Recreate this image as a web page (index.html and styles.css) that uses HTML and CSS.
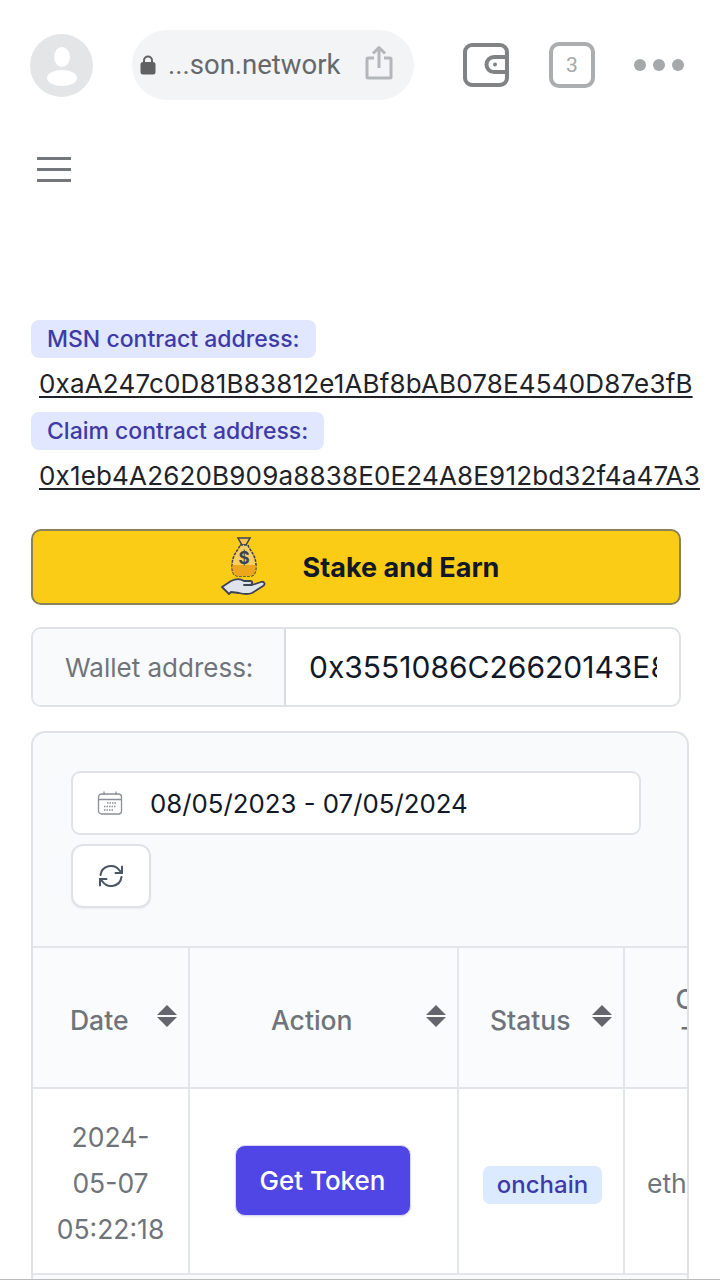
FILE: index.html
```html
<!DOCTYPE html>
<html lang="en">
<head>
<meta charset="utf-8">
<title>Stake and Earn</title>
<link rel="stylesheet" href="styles.css">
</head>
<body>
<header class="browser">
  <div class="avatar">
    <svg width="34" height="40" viewBox="0 0 34 40"><ellipse cx="17" cy="10" rx="8" ry="10" fill="#fff"/><ellipse cx="17" cy="31" rx="15" ry="8" fill="#fff"/></svg>
  </div>
  <div class="url">
    <svg class="lock" width="16" height="20" viewBox="0 0 16 20"><path d="M4 8V5.500a4 4 0 0 1 8 0V8" fill="none" stroke="#5f6163" stroke-width="2"/><rect x="0.500" y="7" width="15" height="12.500" rx="2.500" fill="#5f6163"/></svg>
    <span class="url-text">...son.network</span>
    <svg class="share" width="28" height="35" viewBox="0 0 28 35" fill="none" stroke="#b4b7b9" stroke-width="3" stroke-linejoin="round"><path d="M14 23V3M8 8.500l6-6 6 6"/><path d="M9 13H3a1 1 0 0 0-1 1v18a1 1 0 0 0 1 1h22a1 1 0 0 0 1-1V14a1 1 0 0 0-1-1h-6"/></svg>
  </div>
  <svg class="wallet" width="48" height="46" viewBox="0 0 48 46" fill="none" stroke="#808284" stroke-width="4"><rect x="3" y="3" width="42" height="40" rx="7"/><path d="M45 15H32a7.500 7.500 0 0 0 0 15h13"/><circle cx="33" cy="22.500" r="2" fill="#808284" stroke="none"/></svg>
  <div class="tabs">3</div>
  <div class="dots"><i></i><i></i><i></i></div>
</header>

<button class="menu" aria-label="Menu"><i></i><i></i><i></i></button>

<main class="content">
  <span class="badge">MSN contract address:</span>
  <a class="addr" href="#">0xaA247c0D81B83812e1ABf8bAB078E4540D87e3fB</a>
  <span class="badge">Claim contract address:</span>
  <a class="addr" href="#">0x1eb4A2620B909a8838E0E24A8E912bd32f4a47A3</a>

  <button class="stake">
    <svg width="46" height="60" viewBox="0 0 46 60">
      <path d="M17 1h12l-4 7h-4z" fill="#f6c453" stroke="#3c4454" stroke-width="1.500"/>
      <path d="M19 8h8c1 5 8 9 8 21 0 7-2 10-6 10H17c-4 0-6-3-6-10 0-12 7-16 8-21z" fill="#f8cf5e" stroke="#3c4454" stroke-width="1.500" stroke-dasharray="3 1"/>
      <path d="M11.500 28h23c.5 7-1 11-5.500 11H17c-4.500 0-6-4-5.500-11z" fill="#eda51c"/>
      <text class="dollar" x="23" y="27">$</text>
      <path d="M1 50l9-6c6-3 10-2 13 0h6c3 0 3 3 0 4h-6 8l9-3c3-1 5 2 2 4l-11 7c-5 2-9 1-13 0l-8-1-2 2z" fill="#dfe3ea" stroke="#3c4454" stroke-width="1.800" stroke-linejoin="round"/>
    </svg>
    <span>Stake and Earn</span>
  </button>

  <div class="wallet-group">
    <span class="wallet-label">Wallet address:</span>
    <span class="wallet-value">0x3551086C26620143E8</span>
  </div>

  <section class="card">
    <div class="filters">
      <div class="date">
        <svg width="26" height="26" viewBox="0 0 26 26" fill="none" stroke="#8b9097" stroke-width="1.300"><rect x="1.500" y="4" width="23" height="20" rx="3"/><path d="M1.500 9.500h23M7 1.500V5M19 1.500V5"/><path d="M10 13h9M7 16.500h12M7 20h9" stroke-dasharray="1.500 1"/></svg>
        <span>08/05/2023 - 07/05/2024</span>
      </div>
      <button class="refresh" aria-label="Refresh">
        <svg width="26" height="24" viewBox="0 0 26 24" fill="none" stroke="#4b5563" stroke-width="2" stroke-linecap="round" stroke-linejoin="round"><path d="M2.500 11A10.500 10.500 0 0 1 21.500 6.500L24 9"/><path d="M24 2.500V9h-6.500"/><path d="M23.500 13A10.500 10.500 0 0 1 4.500 17.500L2 15"/><path d="M2 21.500V15h6.500"/></svg>
      </button>
    </div>
    <table class="grid">
      <colgroup><col class="c1"><col class="c2"><col class="c3"><col class="c4"></colgroup>
      <thead>
        <tr>
          <th><div class="th-in"><span>Date</span><b class="sort"></b></div></th>
          <th><div class="th-in th-action"><span>Action</span><b class="sort"></b></div></th>
          <th><div class="th-in th-status"><span>Status</span><b class="sort"></b></div></th>
          <th class="chain">Chain<br>Type</th>
        </tr>
      </thead>
      <tbody>
        <tr>
          <td class="when">2024-<br>05-07<br>05:22:18</td>
          <td><button class="get">Get Token</button></td>
          <td><span class="status">onchain</span></td>
          <td class="net">ethereum</td>
        </tr>
      </tbody>
    </table>
    <div class="next-row"></div>
  </section>
</main>
</body>
</html>
```

FILE: styles.css
```css
* { box-sizing: border-box; }
html, body { margin: 0; height: 1280px; overflow: hidden; background: #fff; }
body { font-family: Inter, "Liberation Sans", sans-serif; color: #111827; width: 720px; }
body::after { content: ""; position: fixed; left: 0; right: 0; bottom: 0; height: 1px; background: #bcbcbc; }
button { font-family: inherit; cursor: pointer; }

.browser { display: flex; align-items: center; height: 130px; padding: 0 0 0 30px; }
.avatar { width: 63px; height: 63px; border-radius: 50%; background: #e3e5e6; display: flex; align-items: center; justify-content: center; overflow: hidden; padding-top: 4px; }
.url { width: 282px; height: 70px; margin-left: 39px; border-radius: 35px; background: #f2f4f5; display: flex; align-items: center; padding-left: 8px; }
.lock { flex: none; }
.url-text { font: 27.500px Roboto, sans-serif; color: #66696c; margin: 0 0 2px 12px; white-space: nowrap; }
.share { margin: 0 0 6px 25px; flex: none; }
.wallet { margin-left: 48px; flex: none; }
.tabs { width: 46px; height: 46px; margin-left: 39px; border: 4px solid #abadaf; border-radius: 10px; display: flex; align-items: center; justify-content: center; font: 21px Roboto, sans-serif; color: #a5a7a9; }
.dots { display: flex; gap: 7px; margin-left: 39px; }
.dots i { width: 12px; height: 12px; border-radius: 50%; background: #a6a8aa; }

.menu { display: flex; flex-direction: column; gap: 8px; border: 0; background: none; padding: 0; margin: 27px 0 0 37px; width: 34px; }
.menu i { display: block; height: 3px; width: 34px; background: #74777c; }

.content { padding: 138px 0 0 31px; display: flex; flex-direction: column; align-items: flex-start; }
.badge { display: block; height: 38px; line-height: 38px; padding: 0 16px; background: #e0e7ff; color: #3f3aa8; border-radius: 8px; font-size: 23px; font-weight: 500; white-space: nowrap; }
.addr { display: block; height: 54px; line-height: 52px; margin-left: 8px; color: #1f2328; font-size: 26px; letter-spacing: .17px; white-space: nowrap; text-decoration: underline; text-underline-offset: 3px; }
.stake { width: 650px; height: 76px; margin-top: 25px; display: flex; align-items: center; justify-content: center; gap: 36px; background: #facc15; border: 2px solid #8a8258; border-radius: 10px; font-size: 27px; font-weight: 700; color: #111827; padding: 0 0 0 8px; }
.dollar { font: 700 17px Inter, sans-serif; fill: #3c4454; text-anchor: middle; }

.wallet-group { width: 650px; height: 80px; margin-top: 22px; display: flex; border: 2px solid #dfe3e8; border-radius: 10px; overflow: hidden; }
.wallet-label { width: 253px; flex: none; background: #f9fafb; border-right: 2px solid #d8dbe0; color: #6f747b; font-size: 26px; display: flex; align-items: center; padding-left: 32px; white-space: nowrap; }
.wallet-value { flex: 1; overflow: hidden; white-space: nowrap; font-size: 30px; line-height: 76px; padding: 0; margin: 0 22px 0 23px; color: #111827; }

.card { width: 658px; margin-top: 24px; border: 2px solid #dfe3e8; border-bottom: 0; border-radius: 14px 14px 0 0; background: #f9fafb; overflow: hidden; }
.filters { padding: 38px 0 38px 38px; }
.date { width: 570px; height: 64px; border: 2px solid #dfe3e8; border-radius: 9px; background: #fff; display: flex; align-items: center; padding-left: 24px; gap: 27px; font-size: 25.800px; color: #111827; }
.refresh { display: flex; align-items: center; justify-content: center; width: 80px; height: 64px; margin-top: 9px; background: #fff; border: 2px solid #dfe3e8; border-radius: 12px; box-shadow: 0 1px 2px rgba(0,0,0,.06); padding: 0; }

.grid { width: 767px; table-layout: fixed; border-collapse: collapse; font-size: 26.500px; color: #6f747b; }
.c1 { width: 156px; } .c2 { width: 269px; } .c3 { width: 166px; } .c4 { width: 176px; }
.grid th, .grid td { border: 2px solid #e2e5e9; }
.grid tr > :first-child { border-left: 0; }
.grid th { height: 141px; font-weight: 500; background: #fafbfc; }
.th-in { display: flex; justify-content: space-between; align-items: flex-start; padding: 4px 10px 0 36px; }
.th-in.th-action { padding-left: 80px; }
.th-in.th-status { padding-left: 30px; }
.th-in span { line-height: 32px; }
.sort { position: relative; display: block; width: 20px; height: 24px; margin-top: 1px; }
.sort::before, .sort::after { content: ""; position: absolute; left: 0; border: 10px solid transparent; }
.sort::before { top: 0; border-top: 0; border-bottom-color: #63676d; }
.sort::after { top: 12px; border-bottom: 0; border-top-color: #63676d; }
.chain { font-weight: 500; line-height: 38px; text-align: center; }
.grid td { height: 186px; background: #fff; text-align: center; padding: 0; }
.grid td.when { line-height: 46px; padding-top: 4px; }
.get { width: 176px; height: 71px; margin: 0 0 2px -2px; border: 1px solid #d9d8f8; border-radius: 10px; background: #4f46e5; color: #fff; font-size: 26px; font-weight: 500; box-shadow: 0 1px 2px rgba(0,0,0,.08); padding: 0; }
.status { display: inline-block; margin: 8px 0 0 3px; height: 38px; line-height: 38px; padding: 0 14px; border-radius: 7px; background: #dbeafe; color: #3f3aa8; font-size: 24px; font-weight: 500; }
.grid td.net { text-align: left; padding: 4px 0 0 22px; white-space: nowrap; }
.next-row { height: 20px; background: #f9fafb; }
```
